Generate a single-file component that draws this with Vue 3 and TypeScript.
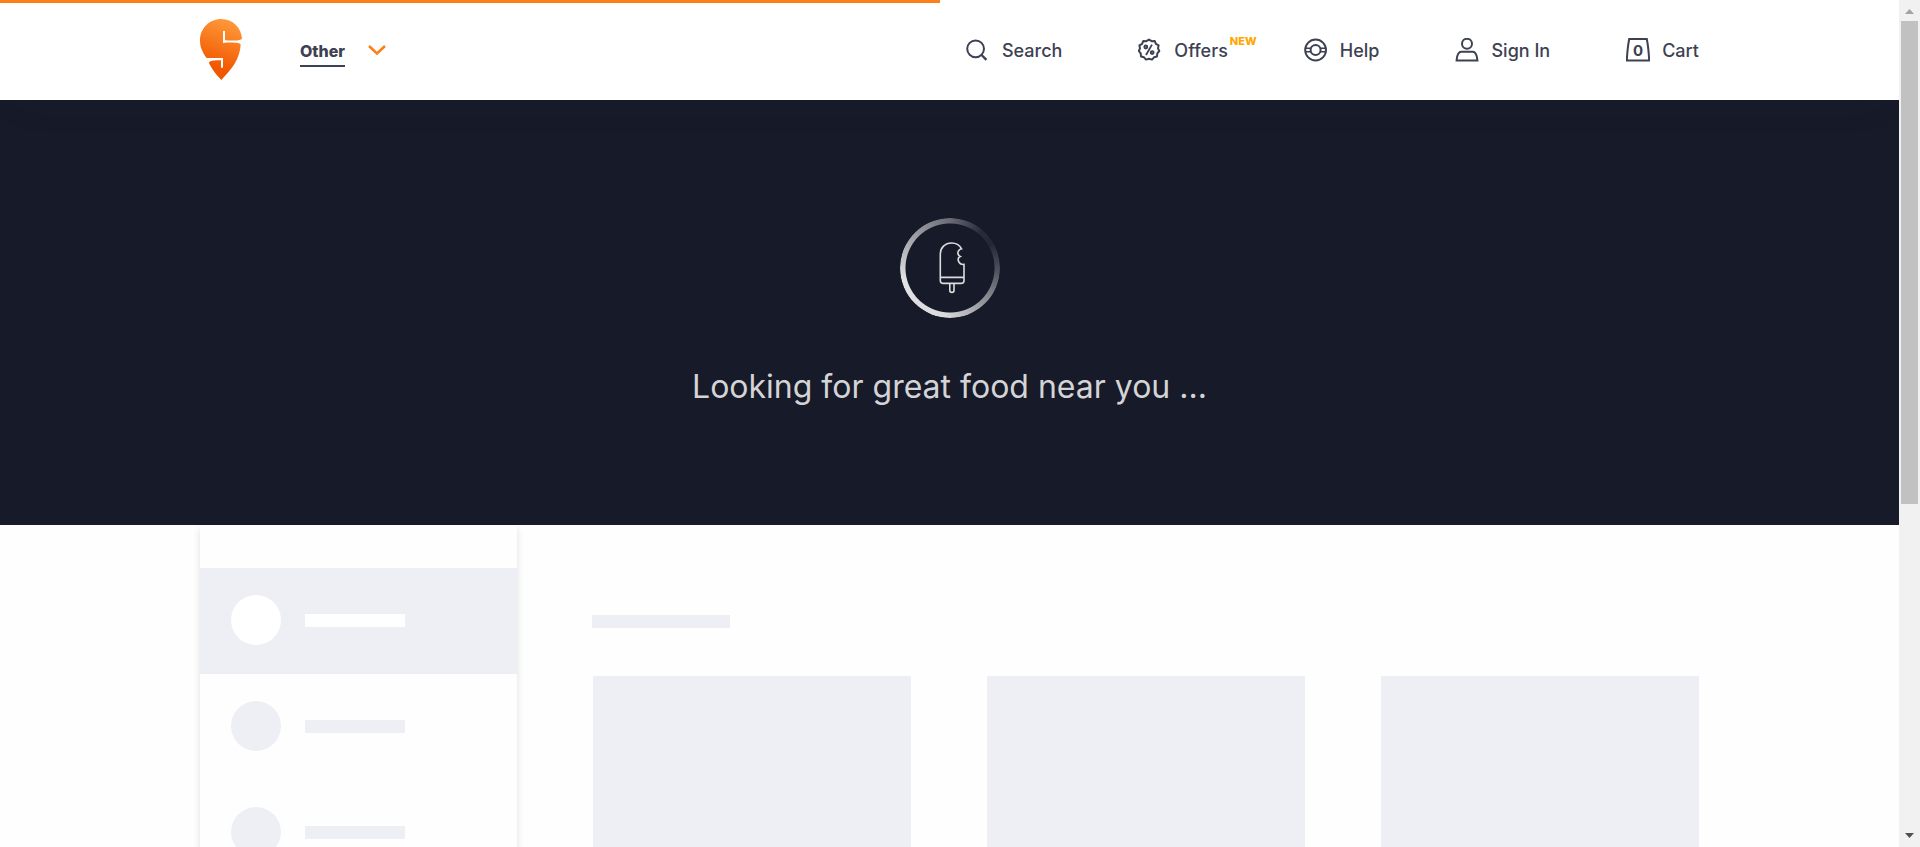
<script setup lang="ts">
interface NavItem {
  id: string
  label: string
  badge?: string
}

const navItems: NavItem[] = [
  { id: 'search', label: 'Search' },
  { id: 'offers', label: 'Offers', badge: 'NEW' },
  { id: 'help', label: 'Help' },
  { id: 'account', label: 'Sign In' },
  { id: 'cart', label: 'Cart' },
]

const progress = 49.5
const cartCount = 0
const filterRows = 4
const cardCount = 3
</script>

<template>
  <div class="shell">
    <div class="page">
      <div class="progress" :style="{ width: progress + '%' }"></div>

      <header class="header">
        <div class="container header-row">
          <a class="logo" href="#" aria-label="Home">
            <svg width="42" height="61" viewBox="0 0 126 183">
              <defs>
                <linearGradient id="pin" x1="0.6" y1="0" x2="0.4" y2="0.8">
                  <stop offset="0" stop-color="#ff993a" />
                  <stop offset="1" stop-color="#f15700" />
                </linearGradient>
              </defs>
              <path
                fill="url(#pin)"
                d="M0 65C0 28 28 0 64 0C98 0 124 26 126 59C122 64 100 66 75 64V36H69V72C95 69 122 71 122 77C121 97 114 116 105 132C95 150 76 170 64 183C54 173 36 152 27 132C26 125 45 123 63 124V146H69V117H20C8 100 0 85 0 65Z"
              />
            </svg>
          </a>
          <button class="location" type="button">
            <span class="location-name">Other</span>
            <svg width="18" height="12" viewBox="0 0 18 12">
              <path d="M1 2L9 9.4L17 2" fill="none" stroke="#fc8019" stroke-width="2.6" />
            </svg>
          </button>

          <nav class="nav">
            <a v-for="item in navItems" :key="item.id" class="nav-link" href="#">
              <svg v-if="item.id === 'search'" class="icon" viewBox="0 0 24 24">
                <circle cx="9.6" cy="10.8" r="8.4" />
                <path d="M15.6 17L20.4 21.8" stroke-width="2.4" />
              </svg>
              <svg v-else-if="item.id === 'offers'" class="icon" viewBox="0 0 24 24">
                <path
                  d="M11 1.6L13.6 3.2L16.7 3L17.9 5.8L20.6 7.4L20 10.4L21.3 13L19.3 15.4L19 18.5L16 19.3L14 21.6L11 20.8L8 21.6L6 19.3L3 18.5L2.7 15.4L0.8 13L2 10.4L1.4 7.4L4.1 5.8L5.3 3L8.4 3.2Z"
                  stroke-linejoin="round"
                />
                <circle cx="7.8" cy="9" r="1.4" />
                <circle cx="14.2" cy="14.6" r="1.4" />
                <path d="M14 6.6L8 17" stroke-width="1.8" />
              </svg>
              <svg v-else-if="item.id === 'help'" class="icon" viewBox="0 0 24 24">
                <circle cx="11.6" cy="12" r="10.4" />
                <circle cx="11.6" cy="12" r="5" />
                <path
                  d="M1.2 10.2H6.8M16.4 10.2H22M1.4 13.8H6.8M16.4 13.8H21.8"
                  stroke-width="1.6"
                />
              </svg>
              <svg v-else-if="item.id === 'account'" class="icon" viewBox="0 0 24 24">
                <circle cx="12" cy="5.8" r="5" />
                <path d="M1.6 22.4C2 17 3 13.8 6.4 13.8H17.6C21 13.8 22 17 22.4 22.4Z" />
              </svg>
              <span v-else class="bag">
                <svg class="icon" viewBox="0 0 24 24">
                  <path d="M3.2 1H20.8C22.2 8 22.8 15 23.2 22.6H0.8C1.2 15 1.8 8 3.2 1Z" />
                </svg>
                <span class="bag-count">{{ cartCount }}</span>
              </span>
              <span class="nav-label">{{ item.label }}</span>
              <span v-if="item.badge" class="badge">{{ item.badge }}</span>
            </a>
          </nav>
        </div>
      </header>

      <section class="hero">
        <div class="loader">
          <div class="ring"></div>
          <svg class="popsicle" width="26" height="52" viewBox="0 0 26 52">
            <path
              d="M22.6 6.8C20.6 3.2 17 1 12.6 1C6 1 1.3 5.8 1.3 12V38.4C1.3 40.4 2.6 41.4 4.4 41.4H22C24 41.4 25 40.2 25 38.4V22.4C22.4 22.8 20.4 21.2 19.6 19.4C18.8 17.4 19.4 15.2 21.2 14.4C19 13.4 18.4 11 19.2 9.4C19.8 8 21 7 22.6 6.8Z"
            />
            <path d="M1.3 35.4H25M10.8 41.4V48.4C10.8 51 15 51 15 48.4V41.4" />
          </svg>
        </div>
        <p class="hero-text">Looking for great food near you ...</p>
      </section>

      <main class="container body-row">
        <aside class="filters">
          <div v-for="n in filterRows" :key="n" class="filter" :class="{ active: n === 1 }">
            <span class="dot"></span>
            <span class="line"></span>
          </div>
        </aside>
        <section class="listing">
          <div class="title-bar"></div>
          <div class="cards">
            <div v-for="n in cardCount" :key="n" class="card"></div>
          </div>
        </section>
      </main>
    </div>

    <div class="scrollbar" aria-hidden="true">
      <svg width="9" height="5" viewBox="0 0 9 5"><path d="M0 5L4.5 0L9 5Z" fill="#a3a3a3" /></svg>
      <div class="track"><div class="thumb"></div></div>
      <svg width="9" height="5" viewBox="0 0 9 5"><path d="M0 0L4.5 5L9 0Z" fill="#505050" /></svg>
    </div>
  </div>
</template>

<style>
body {
  margin: 0;
  overflow: hidden;
}
</style>

<style scoped>
.shell {
  display: flex;
  height: 100vh;
  overflow: hidden;
  background: #fefefe;
  color: #3d4152;
  font-family: Inter, 'Liberation Sans', sans-serif;
}
.page {
  position: relative;
  flex: 1;
  min-width: 0;
  overflow: hidden;
}
.progress {
  position: absolute;
  top: 0;
  left: 0;
  z-index: 2;
  height: 3px;
  background: #fc8019;
}
.container {
  max-width: 1499px;
  margin: 0 auto;
}
.header {
  position: relative;
  background: #fff;
  box-shadow: 0 15px 40px -20px rgba(40, 44, 63, 0.15);
}
.header-row {
  display: flex;
  align-items: center;
  height: 100px;
}
.logo,
.logo svg {
  display: block;
}
.logo {
  padding-bottom: 2px;
}
.location {
  display: flex;
  align-items: center;
  gap: 23px;
  margin-left: 58px;
  padding: 0;
  border: 0;
  background: none;
  color: inherit;
  font: inherit;
}
.location-name {
  padding: 8px 0 4px;
  border-bottom: 2px solid #3d4152;
  font-size: 16px;
  font-weight: 800;
  line-height: 20px;
}
.nav {
  display: flex;
  gap: 76px;
  margin-left: auto;
}
.nav-link {
  position: relative;
  display: flex;
  align-items: center;
  gap: 12px;
  color: inherit;
  font-size: 18px;
  font-weight: 500;
  line-height: 24px;
  text-decoration: none;
}
.nav-label {
  padding-top: 2px;
}
.nav svg {
  display: block;
  fill: none;
  stroke: #3d4152;
  stroke-width: 2;
}
.icon {
  width: 24px;
  height: 24px;
}
.bag {
  position: relative;
}
.bag-count {
  position: absolute;
  inset: 0;
  font-size: 15px;
  font-weight: 700;
  line-height: 26px;
  text-align: center;
}
.badge {
  position: absolute;
  top: -3px;
  left: 100%;
  margin-left: 2px;
  color: #ffa700;
  font-size: 11px;
  font-weight: 800;
  line-height: 14px;
}
.hero {
  display: flex;
  flex-direction: column;
  align-items: center;
  gap: 48px;
  padding: 118px 0 117px;
  background: #171a29;
}
.loader {
  position: relative;
  display: grid;
  place-items: center;
  width: 100px;
  height: 100px;
}
.ring {
  position: absolute;
  inset: 0;
  border-radius: 50%;
  background: conic-gradient(
    rgba(255, 255, 255, 0.36),
    rgba(255, 255, 255, 0.08) 40deg,
    rgba(255, 255, 255, 0.06) 60deg,
    rgba(255, 255, 255, 0.26) 95deg,
    rgba(255, 255, 255, 0.5) 130deg,
    rgba(255, 255, 255, 0.84) 185deg,
    rgba(255, 255, 255, 0.88) 255deg,
    rgba(255, 255, 255, 0.64) 300deg,
    rgba(255, 255, 255, 0.36)
  );
  mask: radial-gradient(circle closest-side, transparent 44px, #000 45px);
}
.popsicle {
  margin-left: 4px;
  fill: none;
  stroke: #dcdcde;
  stroke-width: 1.6;
}
.hero-text {
  margin: 0;
  color: #d4d4d6;
  font-size: 32px;
  line-height: 42px;
}
.body-row {
  display: flex;
  gap: 75px;
}
.filters {
  flex: 0 0 317px;
  padding-top: 43px;
  background: #fefefe;
  box-shadow: 0 4px 7px 0 rgba(40, 44, 63, 0.15);
}
.filter {
  display: flex;
  align-items: center;
  gap: 24px;
  box-sizing: border-box;
  height: 106px;
  padding: 0 0 2px 31px;
}
.dot,
.line {
  background: #eeeff5;
}
.dot {
  width: 50px;
  height: 50px;
  border-radius: 50%;
}
.line {
  width: 100px;
  height: 13px;
}
.active {
  background: #eeeff5;
}
.active .dot,
.active .line {
  background: #fff;
}
.listing {
  flex: 1;
  padding-top: 90px;
}
.title-bar {
  width: 138px;
  height: 13px;
  margin-bottom: 48px;
  background: #eeeff5;
}
.cards {
  display: grid;
  grid-template-columns: repeat(3, 1fr);
  gap: 76px;
  padding-left: 1px;
}
.card {
  height: 210px;
  background: #eeeff5;
}
.scrollbar {
  display: flex;
  flex-direction: column;
  align-items: center;
  flex: 0 0 21px;
  padding: 9px 0;
  box-sizing: border-box;
  background: #f1f1f1;
}
.track {
  flex: 1;
  align-self: stretch;
  margin: 7px 2px;
}
.thumb {
  height: 60%;
  background: #c1c1c1;
}
</style>
